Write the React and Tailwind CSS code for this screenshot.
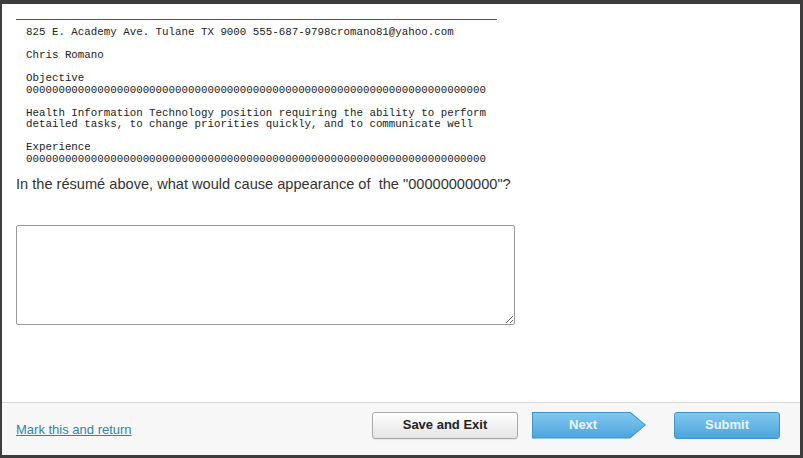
import React from "react";

export default function App() {
  const zeros = "0".repeat(71);
  const resume = [
    "825 E. Academy Ave. Tulane TX 9000 555-687-9798cromano81@yahoo.com",
    "",
    "Chris Romano",
    "",
    "Objective",
    zeros,
    "",
    "Health Information Technology position requiring the ability to perform",
    "detailed tasks, to change priorities quickly, and to communicate well",
    "",
    "Experience",
    zeros,
  ].join("\n");

  return (
    <div className="w-[803px] h-[458px] bg-[#3d3d3d] pt-[4px] pl-[2px] pr-[3px] pb-[3px] font-['Liberation_Sans',Arial,sans-serif]">
      <div className="flex flex-col h-full bg-white">
        {/* Question body */}
        <div className="flex-1 pl-[14px]">
          <div className="mt-[15px] w-[481px] border-t border-[#555]" />
          <pre className="mt-[7px] pl-[10px] font-['Liberation_Mono',monospace] text-[10.8px] leading-[11.5px] text-[#222]">
            {resume}
          </pre>
          <p className="mt-[10px] text-[14.6px] leading-[18px] text-[#333]">
            In the résumé above, what would cause appearance of&nbsp; the "00000000000"?
          </p>
          <textarea className="block mt-[32px] w-[499px] h-[100px] border border-[#9a9a9a] rounded-[2px] resize" />
        </div>

        {/* Footer */}
        <div className="flex items-center h-[53px] border-t border-[#d6d6d6] bg-[#f7f7f7] pl-[14px] pr-[20px]">
          <a href="#" className="mt-[1px] text-[13px] text-[#2b87a8] underline">
            Mark this and return
          </a>
          <div className="ml-auto flex items-center mb-[8px]">
            <button className="w-[146px] h-[27px] rounded-[3px] border border-[#a9a9a9] bg-gradient-to-b from-white to-[#e4e4e4] text-[13px] font-bold text-[#222] shadow-[0_1px_1px_rgba(0,0,0,0.08)]">
              Save and Exit
            </button>
            <div className="ml-[14px] w-[114px] h-[27px] bg-[#3f93c8] [clip-path:polygon(0_0,86%_0,100%_50%,86%_100%,0_100%)]">
              <div className="m-px w-[112px] h-[25px] flex items-center pl-[36px] bg-gradient-to-b from-[#80c8f0] to-[#4ba5dd] [clip-path:polygon(0_0,86%_0,100%_50%,86%_100%,0_100%)] text-[13px] font-bold text-[#e9f5fc]">
                Next
              </div>
            </div>
            <button className="ml-[28px] w-[106px] h-[27px] rounded-[3px] border border-[#3f93c8] bg-gradient-to-b from-[#80c8f0] to-[#4ba5dd] text-[13px] font-bold text-[#e9f5fc]">
              Submit
            </button>
          </div>
        </div>
      </div>
    </div>
  );
}
